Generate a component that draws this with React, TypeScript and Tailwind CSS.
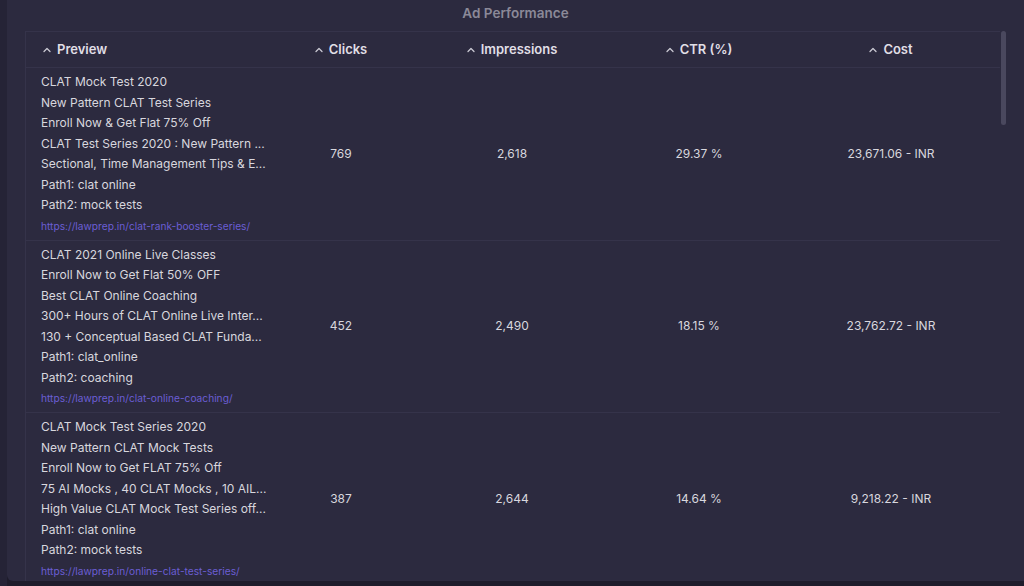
const rows = [
  {
    lines: [
      "CLAT Mock Test 2020",
      "New Pattern CLAT Test Series",
      "Enroll Now & Get Flat 75% Off",
      "CLAT Test Series 2020 : New Pattern ...",
      "Sectional, Time Management Tips & E...",
      "Path1: clat online",
      "Path2: mock tests",
    ],
    url: "https://lawprep.in/clat-rank-booster-series/",
    clicks: "769",
    impressions: "2,618",
    ctr: "29.37 %",
    cost: "23,671.06 - INR",
  },
  {
    lines: [
      "CLAT 2021 Online Live Classes",
      "Enroll Now to Get Flat 50% OFF",
      "Best CLAT Online Coaching",
      "300+ Hours of CLAT Online Live Inter...",
      "130 + Conceptual Based CLAT Funda...",
      "Path1: clat_online",
      "Path2: coaching",
    ],
    url: "https://lawprep.in/clat-online-coaching/",
    clicks: "452",
    impressions: "2,490",
    ctr: "18.15 %",
    cost: "23,762.72 - INR",
  },
  {
    lines: [
      "CLAT Mock Test Series 2020",
      "New Pattern CLAT Mock Tests",
      "Enroll Now to Get FLAT 75% Off",
      "75 AI Mocks , 40 CLAT Mocks , 10 AIL...",
      "High Value CLAT Mock Test Series off...",
      "Path1: clat online",
      "Path2: mock tests",
    ],
    url: "https://lawprep.in/online-clat-test-series/",
    clicks: "387",
    impressions: "2,644",
    ctr: "14.64 %",
    cost: "9,218.22 - INR",
  },
];

const cols = "grid grid-cols-[275px_80px_262px_112px_246px]";

const Caret = () => (
  <svg width="8" height="6" viewBox="0 0 8 6" className="mr-[6px] shrink-0">
    <path d="M1 4.5 L4 1.5 L7 4.5" fill="none" stroke="#c9c8d2" strokeWidth="1.3" strokeLinecap="round" strokeLinejoin="round" />
  </svg>
);

const Head = ({ label }: { label: string }) => (
  <div className="flex items-center">
    <Caret />
    <span>{label}</span>
  </div>
);

export default function App() {
  return (
    <div className="w-[1024px] h-[586px] bg-[#1e1c2b] flex overflow-hidden font-['Inter',sans-serif]">
      <div className="w-[7px] bg-[#252336]" />
      <div className="flex-1 flex flex-col h-[581px] bg-[#2c2a3f] rounded-bl-[6px] overflow-hidden">
        <div className="h-[31px] flex justify-center pt-[3px] text-[13.5px] font-semibold text-[#8b8998]">
          Ad Performance
        </div>
        <div className="flex flex-1 min-h-0">
          <div className="w-[18px] shrink-0" />
          <div className="w-[975px] border-l border-t border-[#35334a] overflow-hidden">
            <div className={`${cols} h-[36px] border-b border-[#35334a] text-[13px] font-semibold text-[#e0dfe6]`}>
              <div className="pl-[17px] flex items-center">
                <Head label="Preview" />
              </div>
              <div className="flex items-center justify-center">
                <Head label="Clicks" />
              </div>
              <div className="flex items-center justify-center">
                <Head label="Impressions" />
              </div>
              <div className="flex items-center justify-center">
                <Head label="CTR (%)" />
              </div>
              <div className="flex items-center justify-center pl-[26px]">
                <Head label="Cost" />
              </div>
            </div>
            {rows.map((row) => (
              <div key={row.url} className={`${cols} h-[172.5px] border-b border-[#35334a] text-[12px] text-[#d8d7de]`}>
                <div className="pl-[15px] pt-[4px] flex flex-col">
                  {row.lines.map((line, i) => (
                    <div key={i} className="h-[20.5px] leading-[20.5px] whitespace-nowrap">
                      {line}
                    </div>
                  ))}
                  <div className="h-[21px] leading-[21px] text-[10.2px] text-[#6b5ed4] whitespace-nowrap">
                    {row.url}
                  </div>
                </div>
                <div className="flex items-center justify-center">{row.clicks}</div>
                <div className="flex items-center justify-center">{row.impressions}</div>
                <div className="flex items-center justify-center">{row.ctr}</div>
                <div className="flex items-center justify-center pl-[26px]">{row.cost}</div>
              </div>
            ))}
          </div>
          <div className="w-[8px] shrink-0 pl-[1px]">
            <div className="w-[5px] h-[94px] rounded-full bg-[#4a485e]" />
          </div>
        </div>
      </div>
    </div>
  );
}
